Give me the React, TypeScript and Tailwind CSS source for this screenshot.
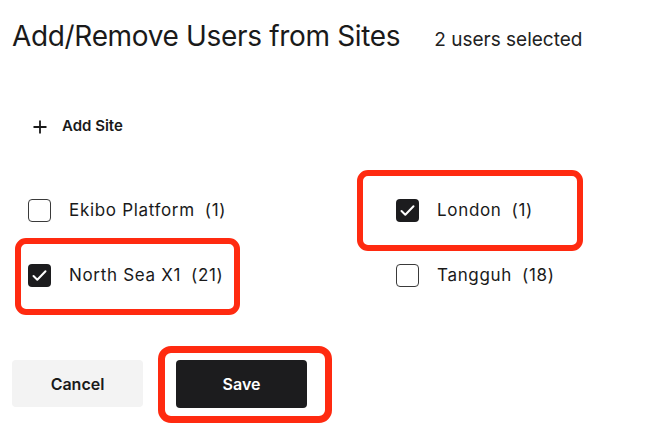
import React from 'react';

interface Site {
  name: string;
  count: number;
  checked: boolean;
  // red annotation box around the row, offsets relative to the row
  mark?: { left: number; top: number; width: number; height: number };
}

const left: Site[] = [
  { name: 'Ekibo Platform', count: 1, checked: false },
  { name: 'North Sea X1', count: 21, checked: true, mark: { left: -13, top: -26, width: 225, height: 77 } },
];

const right: Site[] = [
  { name: 'London', count: 1, checked: true, mark: { left: -39, top: -29, width: 226, height: 81 } },
  { name: 'Tangguh', count: 18, checked: false },
];

const Checkbox = ({ checked }: { checked: boolean }) =>
  checked ? (
    <div className="w-[23px] h-[23px] rounded-[4px] bg-[#1c1c1e] flex items-center justify-center shrink-0">
      <svg width="23" height="23" viewBox="0 0 23 23" fill="none">
        <path d="M5.5 12l3.8 3.8L17.5 7.3" stroke="white" strokeWidth="2" strokeLinecap="round" strokeLinejoin="round" />
      </svg>
    </div>
  ) : (
    <div className="w-[23px] h-[23px] rounded-[4px] border-[1.5px] border-[#3a3a3a] bg-white shrink-0" />
  );

const SiteRow = ({ site }: { site: Site }) => (
  <div className="relative flex items-center h-[24px] w-fit">
    {site.mark && (
      <div
        className="absolute border-[6px] border-[#ff2a10] rounded-[11px] pointer-events-none"
        style={{ left: site.mark.left, top: site.mark.top, width: site.mark.width, height: site.mark.height }}
      />
    )}
    <Checkbox checked={site.checked} />
    <span className="ml-[18px] text-[17px] tracking-[0.04em] text-[#1a1a1a]">{site.name}</span>
    <span className="ml-[10px] text-[17px] tracking-[0.04em] text-[#1a1a1a]">({site.count})</span>
  </div>
);

export default function App() {
  return (
    <div className="w-[670px] h-[444px] bg-white font-['Inter',sans-serif] text-[#1a1a1a]">
      {/* Header */}
      <div className="pt-[18px] pl-[12px] flex items-baseline">
        <h1 className="text-[28px] leading-[36px] font-normal tracking-[-0.012em]">Add/Remove Users from Sites</h1>
        <span className="ml-[34px] text-[19px] text-[#222]">2 users selected</span>
      </div>

      {/* Add site */}
      <button className="mt-[60px] ml-[33px] flex items-center h-[24px]">
        <svg width="14" height="14" viewBox="0 0 14 14" fill="none">
          <path d="M7 0.5v13M0.5 7h13" stroke="#1a1a1a" strokeWidth="1.8" />
        </svg>
        <span className="ml-[15px] text-[15px] font-semibold">Add Site</span>
      </button>

      {/* Sites */}
      <div className="mt-[60px] pl-[28px] grid grid-cols-[368px_1fr]">
        <div className="flex flex-col gap-y-[41px]">
          {left.map((s) => (
            <SiteRow key={s.name} site={s} />
          ))}
        </div>
        <div className="flex flex-col gap-y-[41px]">
          {right.map((s) => (
            <SiteRow key={s.name} site={s} />
          ))}
        </div>
      </div>

      {/* Actions */}
      <div className="mt-[72px] pl-[12px] flex items-center gap-[33px]">
        <button className="w-[131px] h-[47px] rounded-[4px] bg-[#f3f3f3] text-[16px] font-semibold">Cancel</button>
        <div className="relative">
          <div className="absolute left-[-18px] top-[-14px] w-[174px] h-[77px] border-[7px] border-[#ff2a10] rounded-[13px] pointer-events-none" />
          <button className="w-[131px] h-[48px] rounded-[4px] bg-[#1c1c1e] text-white text-[16px] font-semibold">Save</button>
        </div>
      </div>
    </div>
  );
}
